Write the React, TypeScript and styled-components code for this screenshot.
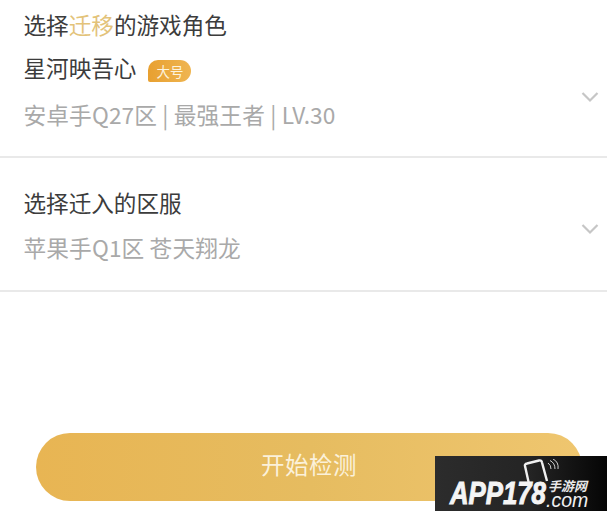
import React, { FC } from 'react';
import styled, { createGlobalStyle } from 'styled-components';

const GlobalStyle = createGlobalStyle`
  html, body {
    margin: 0;
    padding: 0;
    background: #fff;
    overflow: hidden;
  }
  body {
    font-family: "Noto Sans CJK SC", "Liberation Sans", sans-serif;
  }
`;

const Page = styled.div`
  position: relative;
  width: 607px;
  height: 511px;
  overflow: hidden;
  background: #fff;
`;

const Section = styled.section<{ $height: number }>`
  display: flex;
  justify-content: space-between;
  align-items: flex-start;
  box-sizing: border-box;
  height: ${(p) => p.$height}px;
  padding: 0 8px 0 23.5px;
  border-bottom: 2px solid #e9e9e9;
`;

const Info = styled.div<{ $top: number }>`
  display: flex;
  flex-direction: column;
  padding-top: ${(p) => p.$top}px;
`;

const Title = styled.div`
  height: 32px;
  font-size: 22.6px;
  line-height: 32px;
  color: #3c3c3c;
`;

const Accent = styled.span`
  color: #e3c37a;
`;

const NameRow = styled.div`
  display: flex;
  align-items: center;
  gap: 12px;
  margin-top: 11px;
  height: 32px;
  font-size: 22.6px;
  line-height: 32px;
  color: #3c3c3c;
`;

const Badge = styled.span`
  display: flex;
  align-items: center;
  justify-content: center;
  width: 43px;
  height: 22px;
  margin-top: 6px;
  border-radius: 10px 11px 11px 2px;
  background: linear-gradient(90deg, #e8a030, #efb551);
  color: #fdf3dc;
  font-size: 13.5px;
  line-height: 22px;
`;

const Detail = styled.div<{ $gap: number }>`
  margin-top: ${(p) => p.$gap}px;
  height: 32px;
  font-size: 22.7px;
  line-height: 32px;
  letter-spacing: 0.12px;
  color: #a9a9a9;
  white-space: pre;
`;

const Chevron = styled.svg<{ $top: number }>`
  margin-top: ${(p) => p.$top}px;
  width: 18px;
  height: 12px;
`;

const ButtonRow = styled.div`
  padding: 141px 25px 0 36px;
`;

const StartButton = styled.div`
  display: flex;
  align-items: center;
  justify-content: center;
  box-sizing: border-box;
  height: 68px;
  padding-bottom: 6px;
  border-radius: 34px;
  background: linear-gradient(90deg, #e8b553, #e6bc60 50%, #efc66f);
  color: #fbf1da;
  font-size: 23.5px;
  letter-spacing: 0.5px;
`;

const Watermark = styled.div`
  position: absolute;
  right: 0;
  bottom: 0;
  display: flex;
  align-items: flex-end;
  box-sizing: border-box;
  width: 172px;
  height: 55px;
  padding: 0 20px 2px 15px;
  background: linear-gradient(90deg, #2c2c2c, #242424 55%, #050505);
  overflow: hidden;
`;

const WatermarkPhone = styled.svg`
  position: absolute;
  left: 88px;
  top: 3px;
  width: 38px;
  height: 26px;
`;

const WatermarkApp = styled.span`
  flex: 0 0 96px;
  min-width: 0;
  font-family: "Liberation Sans", sans-serif;
  font-size: 31px;
  line-height: 31px;
  font-weight: 700;
  font-style: italic;
  white-space: nowrap;
  color: #f4f4f4;
  -webkit-text-stroke: 1px #f4f4f4;
  transform: scaleX(0.83);
  transform-origin: left bottom;
`;

const WatermarkSide = styled.div`
  display: flex;
  flex-direction: column;
  align-items: flex-start;
`;

const WatermarkCn = styled.span`
  padding-left: 2px;
  font-size: 13px;
  line-height: 12px;
  font-weight: 700;
  font-style: italic;
  white-space: nowrap;
  color: #e8e8e8;
`;

const WatermarkCom = styled.span`
  font-family: "Liberation Sans", sans-serif;
  font-size: 19.5px;
  line-height: 17px;
  font-style: italic;
  white-space: nowrap;
  color: #f0f0f0;
`;

const Arrow: FC<{ top: number }> = ({ top }) => (
  <Chevron $top={top} viewBox="0 0 18 12" fill="none">
    <path d="M1.5 2 L9 9.5 L16.5 2" stroke="#c6c6c6" strokeWidth="2.2" />
  </Chevron>
);

const App: FC = () => {
  return (
    <Page>
      <GlobalStyle />
      <Section $height={158}>
        <Info $top={9}>
          <Title>
            选择<Accent>迁移</Accent>的游戏角色
          </Title>
          <NameRow>
            星河映吾心
            <Badge>大号</Badge>
          </NameRow>
          <Detail $gap={15}>安卓手Q27区 | 最强王者 | LV.30</Detail>
        </Info>
        <Arrow top={91} />
      </Section>
      <Section $height={134}>
        <Info $top={29}>
          <Title>选择迁入的区服</Title>
          <Detail $gap={13}>苹果手Q1区 苍天翔龙</Detail>
        </Info>
        <Arrow top={65} />
      </Section>
      <ButtonRow>
        <StartButton>开始检测</StartButton>
      </ButtonRow>
      <Watermark>
        <WatermarkPhone viewBox="0 0 38 26" fill="none">
          <path d="M6 25 L2 7 Q1.500 5 4 4.500 L16 1.500 Q18.500 1 19 3.500 L24 22" stroke="#f0f0f0" strokeWidth="2.4" />
          <path d="M25 4 Q28 6 28 10 M27 1.500 Q32 4 32 10 M30 0 Q36 3 35 10" stroke="#cfcfcf" strokeWidth="1" />
        </WatermarkPhone>
        <WatermarkApp>APP178</WatermarkApp>
        <WatermarkSide>
          <WatermarkCn>手游网</WatermarkCn>
          <WatermarkCom>.com</WatermarkCom>
        </WatermarkSide>
      </Watermark>
    </Page>
  );
};

export default App;
